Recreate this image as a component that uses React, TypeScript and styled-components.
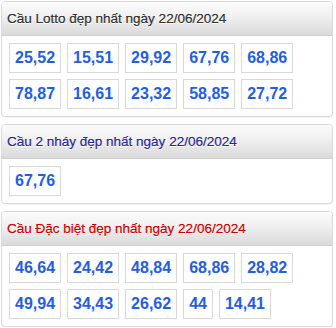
import React from "react";
import styled, { createGlobalStyle } from "styled-components";

const Global = createGlobalStyle`
  html, body { margin: 0; padding: 0; background: #fff; }
  body { font-family: "Liberation Sans", Arial, sans-serif; }
`;

const Wrap = styled.div`
  display: flex;
  flex-direction: column;
  gap: 7px;
  padding: 1px 3px 0 1px;
  width: 336px;
  box-sizing: border-box;
`;

const Panel = styled.section`
  border: 1px solid #d9d9d9;
  border-radius: 4px;
  background: #fff;
  overflow: hidden;
  box-shadow: 0 1px 1px rgba(0, 0, 0, 0.05);
`;

const Header = styled.h3<{ $tone: string }>`
  margin: 0;
  height: 33px;
  display: flex;
  align-items: center;
  padding: 0 5px;
  border-bottom: 1px solid #d0d0d0;
  background: linear-gradient(to bottom, #fbfbfb 0%, #f1f1f1 40%, #dadada 100%);
  font-family: "Liberation Sans", Arial, sans-serif;
  font-size: 13.5px;
  font-weight: normal;
  color: ${(p) => p.$tone};
  text-shadow: 0 1px 0 #fff, 0 0 0.4px ${(p) => p.$tone};
`;

const Body = styled.div`
  display: flex;
  flex-wrap: wrap;
  gap: 6px;
  padding: 7px;
`;

const NumBox = styled.span`
  display: inline-flex;
  align-items: center;
  height: 30px;
  box-sizing: border-box;
  padding: 0 5px;
  border: 1px solid #d8d8d8;
  font-family: "Liberation Sans", Arial, sans-serif;
  font-size: 16px;
  font-weight: bold;
  color: #1f5ee6;
`;

const sections = [
  {
    title: "Cầu Lotto đẹp nhất ngày 22/06/2024",
    tone: "#333333",
    nums: ["25,52", "15,51", "29,92", "67,76", "68,86", "78,87", "16,61", "23,32", "58,85", "27,72"],
  },
  {
    title: "Cầu 2 nháy đẹp nhất ngày 22/06/2024",
    tone: "#2a2a9c",
    nums: ["67,76"],
  },
  {
    title: "Cầu Đặc biệt đẹp nhất ngày 22/06/2024",
    tone: "#d30000",
    nums: ["46,64", "24,42", "48,84", "68,86", "28,82", "49,94", "34,43", "26,62", "44", "14,41"],
  },
];

export default function App() {
  return (
    <>
      <Global />
      <Wrap>
        {sections.map((s) => (
          <Panel key={s.title}>
            <Header $tone={s.tone}>{s.title}</Header>
            <Body>
              {s.nums.map((n, i) => (
                <NumBox key={i}>{n}</NumBox>
              ))}
            </Body>
          </Panel>
        ))}
      </Wrap>
    </>
  );
}
